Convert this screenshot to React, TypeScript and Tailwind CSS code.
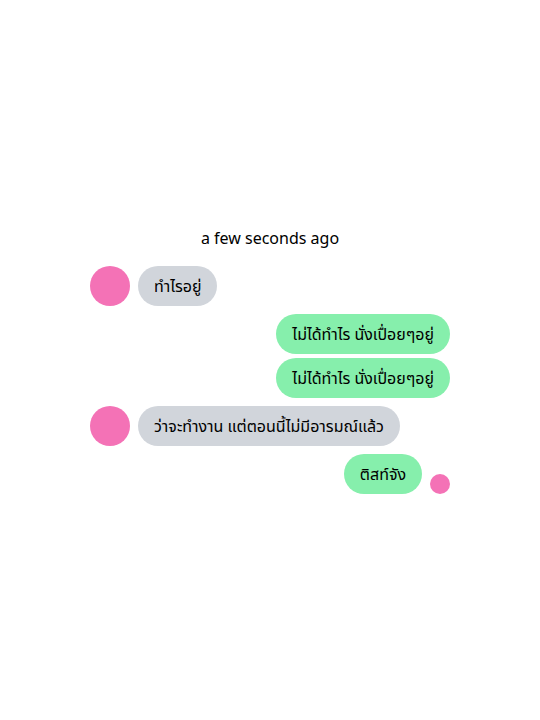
import React from "react";

type Msg = { id: number; from: "them" | "me"; text: string };

const messages: Msg[] = [
  { id: 1, from: "them", text: "ทำไรอยู่" },
  { id: 2, from: "me", text: "ไม่ได้ทำไร นั่งเปื่อยๆอยู่" },
  { id: 3, from: "me", text: "ไม่ได้ทำไร นั่งเปื่อยๆอยู่" },
  { id: 4, from: "them", text: "ว่าจะทำงาน แต่ตอนนี้ไม่มีอารมณ์แล้ว" },
  { id: 5, from: "me", text: "ติสท์จัง" },
];

export default function App() {
  return (
    <div
      className="min-h-screen flex items-center justify-center bg-white text-black"
      style={{ fontFamily: '"Noto Sans", "Noto Sans Thai", sans-serif' }}
    >
      <div className="w-[360px] flex flex-col">
        <div className="text-center text-base leading-6 mb-4">a few seconds ago</div>
        {messages.map((m, i) => {
          const prev = messages[i - 1];
          const mt = i === 0 ? "" : prev.from === m.from ? "mt-1" : "mt-2";
          const isLast = i === messages.length - 1;
          if (m.from === "them") {
            return (
              <div key={m.id} className={`flex items-center gap-2 ${mt}`}>
                <div className="w-10 h-10 rounded-full bg-[#f472b6] shrink-0" />
                <div className="h-10 px-4 flex items-center rounded-full bg-[#d1d5db] text-base">
                  {m.text}
                </div>
              </div>
            );
          }
          return (
            <div key={m.id} className={`flex items-end justify-end gap-2 ${mt}`}>
              <div className="h-10 px-4 flex items-center rounded-full bg-[#86efac] text-base">
                {m.text}
              </div>
              {isLast && <div className="w-5 h-5 rounded-full bg-[#f472b6] shrink-0" />}
            </div>
          );
        })}
      </div>
    </div>
  );
}
